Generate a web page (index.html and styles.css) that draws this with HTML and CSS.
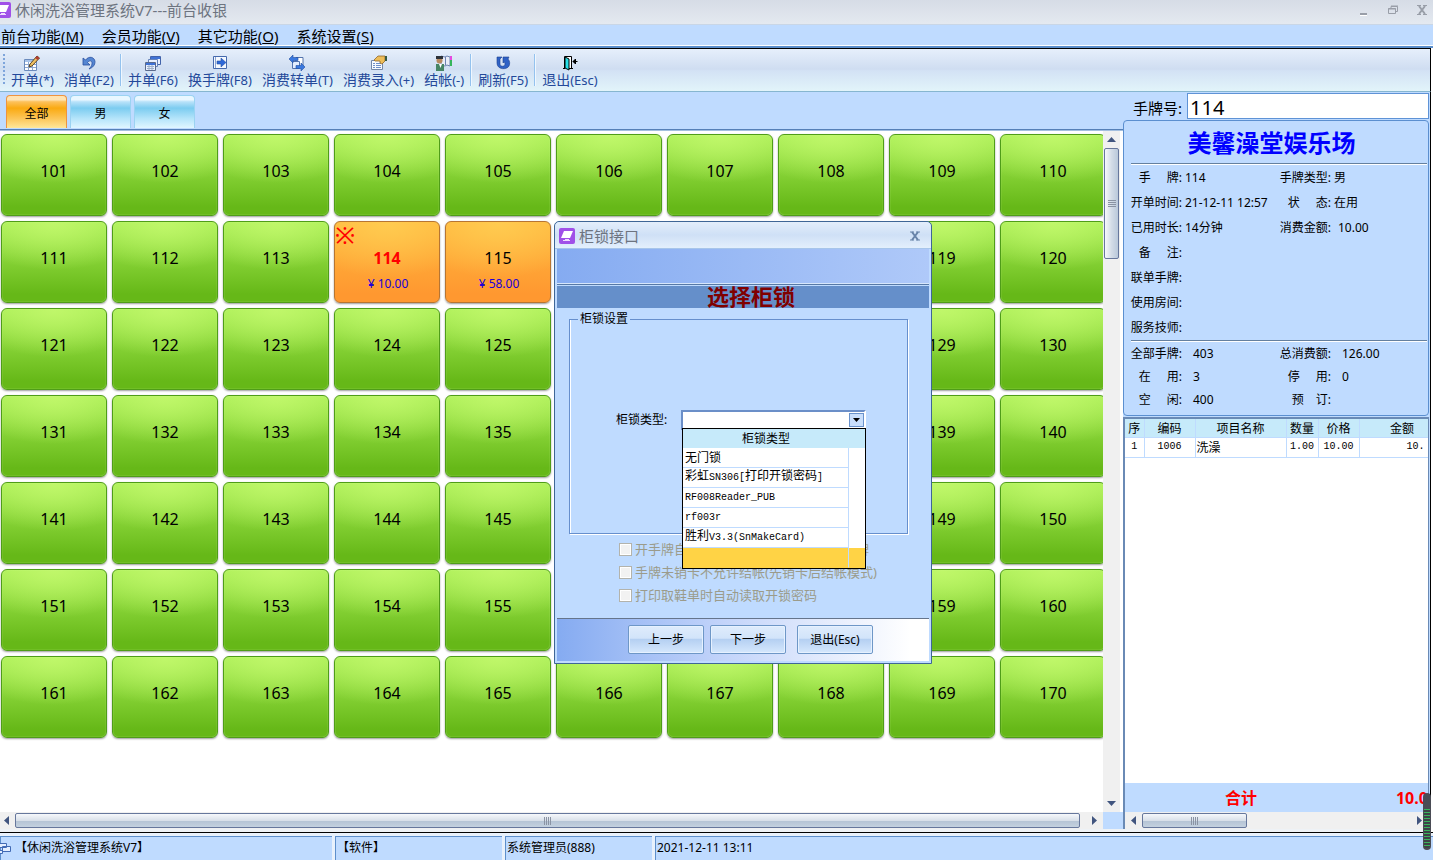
FILE: index.html
```html
<!DOCTYPE html>
<html lang="zh-CN">
<head>
<meta charset="utf-8">
<title>休闲洗浴管理系统V7---前台收银</title>
<link rel="stylesheet" href="styles.css">
</head>
<body>
<div class="app">
  <header class="titlebar">
    <svg class="logo" viewBox="0 0 16 16"><rect width="16" height="16" rx="2" fill="#a050e8"/><path d="M5 3h9l-3 7H2z" fill="#fff"/><path d="M6 11h4v1h1v1H4v-1h2z" fill="#f0dcff"/></svg>
    <h1 class="titletext">休闲洗浴管理系统V7---前台收银</h1>
    <div class="winbtns">
      <button class="winbtn" aria-label="最小化"><svg viewBox="0 0 12 12"><path d="M2 9h7v2H2z" fill="#999ea8"/><path d="M2 11h7v1H2z" fill="#fff"/></svg></button>
      <button class="winbtn" aria-label="还原"><svg viewBox="0 0 12 12" fill="none" stroke="#999ea8"><path d="M4 4V2.500h6.500v5H9M4 2h7"/><path d="M1.500 4.500h7v5h-7zM1 5h8"/></svg></button>
      <button class="winbtn" aria-label="关闭"><svg viewBox="0 0 12 12"><path d="M3 2l6 8M9 2l-6 8" stroke="#999ea8" stroke-width="2"/><path d="M1 1.500h4M7 1.500h4M1 10.500h4M7 10.500h4" stroke="#999ea8"/></svg></button>
    </div>
  </header>
  <nav class="menubar">
    <a href="#">前台功能(<u>M</u>)</a>
    <a href="#">会员功能(<u>V</u>)</a>
    <a href="#">其它功能(<u>O</u>)</a>
    <a href="#">系统设置(<u>S</u>)</a>
  </nav>
  <div class="frame">
    <div class="toolbar">
      <span class="grip"></span>
      <button class="tool"><svg viewBox="0 0 16 16"><path d="M.500 4.500h12v11H.500z" fill="#fff" stroke="#6b8bbd"/><path d="M1 5h11v2H1z" fill="#a8c4ea"/><path d="M4.500 7v8M8.500 7v8M1 9.500h11M1 12.500h11" stroke="#8fa8cf"/><path d="M13 1l2.500 2L8 11l-3 1 1-3z" fill="#f0c060" stroke="#5a4526"/><path d="M13 1l2.500 2-2 2L11 3z" fill="#b03c34"/></svg>开单<span class="key">(*)</span></button>
      <button class="tool"><svg viewBox="0 0 16 16"><path d="M2 3v7h7L6.500 7.500C9 4.500 11.500 6 11 9c-.300 2-1.500 3.500-3 5 4-1.500 6-4 6-7.500C13.500 2 8 .5 4.500 5z" fill="#5586d2" stroke="#294f9e" stroke-width=".8"/></svg>消单<span class="key">(F2)</span></button>
      <span class="sep"></span>
      <button class="tool"><svg viewBox="0 0 16 16"><path d="M5.500 1.500h10v8h-10z" fill="#e9f1ff" stroke="#4263aa"/><path d="M6 2h9v2H6z" fill="#3f72d6"/><path d="M3.500 4.500h9v7h-9z" fill="#e9f1ff" stroke="#6582b9"/><path d="M.500 7.500h10v8H.500z" fill="#e9f1ff" stroke="#5a6a8c"/><path d="M1 8h9v2H1z" fill="#3f72d6"/><path d="M2 11.500h7M2 13.500h7M4 10v5M7 10v5" stroke="#9eafc9"/></svg>并单<span class="key">(F6)</span></button>
      <button class="tool"><svg viewBox="0 0 16 16"><path d="M1.500 1.500h13v12h-13z" fill="#f5f9ff" stroke="#4569ad"/><path d="M3.500 2v11" stroke="#8ba3cf"/><path d="M5 6h4V3l5 4.500L9 12V9H5z" fill="#2e68d8" stroke="#2750a3" stroke-width=".6"/></svg>换手牌<span class="key">(F8)</span></button>
      <button class="tool"><svg viewBox="0 0 16 16"><path d="M7 2.500h7v9H7z" fill="#fff" stroke="#5474ad"/><path d="M3.500 6.500h7v7h-7z" fill="#e4eeff" stroke="#5474ad"/><path d="M0 4l4-4v2.500h5v3H4V8zM16 12l-4 4v-2.500H7v-3h5V8z" fill="#3a78df" stroke="#234f9e" stroke-width=".6"/></svg>消费转单<span class="key">(T)</span></button>
      <button class="tool"><svg viewBox="0 0 16 16"><path d="M.500 5.500h11v9H.500z" fill="#f7faff" stroke="#7387a8"/><path d="M2 8.500h2M5 8.500h5M2 10.500h2M5 10.500h5M2 12.500h2M5 12.500h5" stroke="#6e8fc9"/><path d="M3 5l4-4h7v5l-3 3-2-1V6H4z" fill="#edbd59" stroke="#92672c" stroke-width=".8"/><path d="M14 1h2v5h-2z" fill="#385943"/></svg>消费录入<span class="key">(+)</span></button>
      <button class="tool"><svg viewBox="0 0 16 16"><path d="M5 1l4 1 2-1 3 1v9l-3-1-2 1-4-1z" fill="#e9edf8" stroke="#6d81ae"/><path d="M9.500 2v8" stroke="#6d81ae"/><path d="M14 1h2v4h-2z" fill="#e54ae0"/><path d="M14 5h2v6h-2z" fill="#35b55a"/><circle cx="3.500" cy="5.500" r="3" fill="#b78a61"/><path d="M0 1h7v3H0z" fill="#2c3138"/><path d="M0 16V9h8v7z" fill="#468564"/><path d="M3 9h3l-1.500 4z" fill="#fff"/></svg>结帐<span class="key">(-)</span></button>
      <span class="sep"></span>
      <button class="tool"><svg viewBox="0 0 16 16"><path d="M2 2h5L5 4v5c0 3 5 3 5 0 0-1-.500-2-1-2L8 8V2h6l-1 2c2 2 2 5 1 7-2 4-12 4-12-3z" fill="#2f62c6" stroke="#1c408d" stroke-width=".6"/></svg>刷新<span class="key">(F5)</span></button>
      <span class="sep"></span>
      <button class="tool"><svg viewBox="0 0 16 16"><path d="M2.500 13.500v-12h7v12" fill="#fff" stroke="#000"/><path d="M3 2l4 2v11l-4-2z" fill="#28e0e8" stroke="#000"/><path d="M1 13.500h2M7 13.500h4" stroke="#000"/><path d="M15.500 6.500H11M13.500 4v5M11 6.500l2-2v4z" stroke="#000" fill="#000"/></svg>退出<span class="key">(Esc)</span></button>
    </div>
    <main class="main">
      <section class="left">
        <div class="tabs" role="tablist">
          <button class="tab on" role="tab" aria-selected="true">全部</button>
          <button class="tab" role="tab">男</button>
          <button class="tab" role="tab">女</button>
        </div>
        <div class="scrollarea">
          <div class="tiles">
            <button class="tile">101</button><button class="tile">102</button><button class="tile">103</button><button class="tile">104</button><button class="tile">105</button><button class="tile">106</button><button class="tile">107</button><button class="tile">108</button><button class="tile">109</button><button class="tile">110</button>
            <button class="tile">111</button><button class="tile">112</button><button class="tile">113</button>
            <button class="tile busy current"><span class="mark">※</span>114<span class="fee">¥ 10.00</span></button>
            <button class="tile busy">115<span class="fee">¥ 58.00</span></button>
            <button class="tile">116</button><button class="tile">117</button><button class="tile">118</button><button class="tile">119</button><button class="tile">120</button>
            <button class="tile">121</button><button class="tile">122</button><button class="tile">123</button><button class="tile">124</button><button class="tile">125</button><button class="tile">126</button><button class="tile">127</button><button class="tile">128</button><button class="tile">129</button><button class="tile">130</button>
            <button class="tile">131</button><button class="tile">132</button><button class="tile">133</button><button class="tile">134</button><button class="tile">135</button><button class="tile">136</button><button class="tile">137</button><button class="tile">138</button><button class="tile">139</button><button class="tile">140</button>
            <button class="tile">141</button><button class="tile">142</button><button class="tile">143</button><button class="tile">144</button><button class="tile">145</button><button class="tile">146</button><button class="tile">147</button><button class="tile">148</button><button class="tile">149</button><button class="tile">150</button>
            <button class="tile">151</button><button class="tile">152</button><button class="tile">153</button><button class="tile">154</button><button class="tile">155</button><button class="tile">156</button><button class="tile">157</button><button class="tile">158</button><button class="tile">159</button><button class="tile">160</button>
            <button class="tile">161</button><button class="tile">162</button><button class="tile">163</button><button class="tile">164</button><button class="tile">165</button><button class="tile">166</button><button class="tile">167</button><button class="tile">168</button><button class="tile">169</button><button class="tile">170</button>
          </div>
          <div class="vbar">
            <svg class="arrow" viewBox="0 0 17 17"><path d="M4 11l4.500-5L13 11z" fill="#41557f"/></svg>
            <div class="vthumb"><svg viewBox="0 0 8 8"><path d="M0 .500h8M0 2.500h8M0 4.500h8M0 6.500h8" stroke="#8a93a3"/></svg></div>
            <svg class="arrow end" viewBox="0 0 17 17"><path d="M4 6l4.500 5L13 6z" fill="#41557f"/></svg>
          </div>
        </div>
        <div class="hbar">
          <svg class="arrow thin" viewBox="0 0 15 17"><path d="M9 4L4 8.500 9 13z" fill="#41557f"/></svg>
          <div class="hthumb wide"><svg viewBox="0 0 8 8"><path d="M.500 0v8M2.500 0v8M4.500 0v8M6.500 0v8" stroke="#8a93a3"/></svg></div>
          <svg class="arrow end" viewBox="0 0 17 17"><path d="M6 4l5 4.500L6 13z" fill="#41557f"/></svg>
          <span class="corner"></span>
        </div>
      </section>
      <aside class="right">
        <div class="finder"><label for="card">手牌号:</label><input id="card" type="text" value="114"></div>
        <div class="card">
          <h2 class="shop">美馨澡堂娱乐场</h2>
          <dl class="info">
            <dt>手&emsp;&emsp13;牌:</dt><dd>114</dd><dt>手牌类型:</dt><dd>男</dd>
            <dt>开单时间:</dt><dd>21-12-11 12:57</dd><dt>状&emsp;&emsp13;态:</dt><dd>在用</dd>
            <dt>已用时长:</dt><dd>14分钟</dd><dt>消费金额:</dt><dd>&emsp13;10.00</dd>
            <dt>备&emsp;&emsp13;注:</dt><dd></dd><dt></dt><dd></dd>
            <dt>联单手牌:</dt><dd></dd><dt></dt><dd></dd>
            <dt>使用房间:</dt><dd></dd><dt></dt><dd></dd>
            <dt>服务技师:</dt><dd></dd><dt></dt><dd></dd>
          </dl>
          <dl class="info stats">
            <dt>全部手牌:</dt><dd>403</dd><dt>总消费额:</dt><dd>126.00</dd>
            <dt>在&emsp;&emsp13;用:</dt><dd>3</dd><dt>停&emsp;&emsp13;用:</dt><dd>0</dd>
            <dt>空&emsp;&emsp13;闲:</dt><dd>400</dd><dt>预&emsp;订:</dt><dd></dd>
          </dl>
        </div>
        <div class="bill">
          <div class="billrows">
            <table class="items">
              <colgroup><col class="c1"><col class="c2"><col class="c3"><col class="c4"><col class="c5"><col class="c6"></colgroup>
              <thead><tr><th>序</th><th>编码</th><th>项目名称</th><th>数量</th><th>价格</th><th>金额</th></tr></thead>
              <tbody><tr><td class="num">1</td><td class="num">1006</td><td>洗澡</td><td class="num">1.00</td><td class="num">10.00</td><td class="num sum">10.</td></tr></tbody>
            </table>
          </div>
          <div class="total"><span class="totlabel">合计</span><span class="totval">10.00</span></div>
          <div class="hbar">
            <svg class="arrow" viewBox="0 0 17 17"><path d="M11 4L6 8.500l5 4.500z" fill="#41557f"/></svg>
            <div class="hthumb short"><svg viewBox="0 0 8 8"><path d="M.500 0v8M2.500 0v8M4.500 0v8M6.500 0v8" stroke="#8a93a3"/></svg></div>
            <svg class="arrow end" viewBox="0 0 17 17"><path d="M6 4l5 4.500L6 13z" fill="#41557f"/></svg>
          </div>
        </div>
      </aside>
    </main>
  </div>
  <footer class="status">
    <span class="cell s1"><svg viewBox="0 0 12 14" fill="#e4efff" stroke="#426bb5"><path d="M-3.500 2.500h10v4h-10zM2.500 5.500h8v5h-8zM-3.500 9.500h6v3h-6z"/></svg>【休闲洗浴管理系统V7】</span>
    <span class="cell s2">【软件】</span>
    <span class="cell s3">系统管理员(888)</span>
    <span class="cell s4">2021-12-11 13:11</span>
  </footer>

  <section class="dialog" role="dialog" aria-labelledby="dlgname">
    <header class="dlgtitle">
      <svg class="logo" viewBox="0 0 16 16"><rect width="16" height="16" rx="2" fill="#a050e8"/><path d="M5 3h9l-3 7H2z" fill="#fff"/><path d="M6 11h4v1h1v1H4v-1h2z" fill="#f0dcff"/></svg>
      <span id="dlgname" class="titletext">柜锁接口</span>
      <button class="winbtn" aria-label="关闭对话框"><svg viewBox="0 0 12 12"><path d="M3 2l6 8M9 2l-6 8" stroke="#6883a8" stroke-width="2"/><path d="M1 2h4M7 2h4M1 10h4M7 10h4" stroke="#6883a8"/></svg></button>
    </header>
    <div class="banner"></div>
    <h2 class="dlghead">选择柜锁</h2>
    <div class="dlgbody">
      <fieldset class="group">
        <legend>柜锁设置</legend>
        <div class="field">
          <label for="lock">柜锁类型:</label>
          <div class="combo">
            <select id="lock"><option></option></select>
            <span class="drop"><svg viewBox="0 0 7 4"><path d="M0 0h7L3.500 4z"/></svg></span>
            <table class="popup">
              <thead><tr><th>柜锁类型</th><th class="spare"></th></tr></thead>
              <tbody>
                <tr><td>无门锁</td><td></td></tr>
                <tr><td>彩虹<span class="mono">SN306[</span>打印开锁密码<span class="mono">]</span></td><td></td></tr>
                <tr><td><span class="mono">RF008Reader_PUB</span></td><td></td></tr>
                <tr><td><span class="mono">rf003r</span></td><td></td></tr>
                <tr><td>胜利<span class="mono">V3.3(SnMakeCard)</span></td><td></td></tr>
                <tr class="picked"><td></td><td></td></tr>
              </tbody>
            </table>
          </div>
        </div>
      </fieldset>
      <div class="checks">
        <label><input type="checkbox" disabled>开手牌自动打开锁密码并且自动读取手牌</label>
        <label><input type="checkbox" disabled>手牌未销卡不允许结帐(先销卡后结帐模式)</label>
        <label><input type="checkbox" disabled>打印取鞋单时自动读取开锁密码</label>
      </div>
    </div>
    <footer class="dlgfoot">
      <button class="btn">上一步</button>
      <button class="btn">下一步</button>
      <button class="btn last">退出(Esc)</button>
    </footer>
  </section>
  <div class="meter"></div>
</div>
</body>
</html>
```
FILE: styles.css
```css
* { box-sizing: border-box; }
body {
  margin: 0;
  font: 12px/16px "Noto Sans", "Noto Sans CJK SC", sans-serif;
  color: #000;
}
button, input, select { font: inherit; color: inherit; }
button { border: 0; padding: 0; background: none; }
h1, h2, dl, dd { margin: 0; font-weight: normal; }

.app {
  position: relative;
  display: flex;
  flex-direction: column;
  height: 100vh;
  overflow: hidden;
  background: #bfdbff;
}

/* title and menu */
.titlebar {
  display: flex;
  align-items: center;
  height: 25px;
  padding-bottom: 4px;
  background: linear-gradient(#d6dce6, #e4e9f0);
  border-bottom: 1px solid #c9d6e6;
}
.logo { width: 16px; height: 16px; flex: none; }
.titlebar .logo { margin-left: -5px; }
.titletext { margin-left: 4px; font-size: 15px; line-height: 20px; color: #6d7480; }
.winbtns { display: flex; gap: 17px; margin-left: auto; padding-right: 5px; }
.winbtn { width: 12px; height: 12px; }
.winbtn svg { display: block; width: 12px; height: 12px; }
.menubar {
  display: flex;
  gap: 18px;
  height: 20px;
  padding-left: 1px;
  font-size: 15px;
  line-height: 23px;
}
.menubar a { color: #000; text-decoration: none; white-space: nowrap; }

.frame {
  flex: 1;
  display: flex;
  flex-direction: column;
  min-height: 0;
  border-top: 1px solid #fff;
  box-shadow: inset 0 2px #5d8fcb;
  padding-top: 2px;
  background: #fff;
}
.toolbar {
  display: flex;
  align-items: flex-start;
  gap: 10px;
  height: 44px;
  margin-right: 2px;
  padding: 5px 0 0 3px;
  border-top: 1px solid #000;
  border-right: 1px solid #000;
  border-bottom: 1px solid #86b6d0;
  background: linear-gradient(#e6effb, #cfddf1 48%, #d3e2f5 52%, #e2f4fa);
}
.grip { width: 2px; height: 32px; margin-right: -4px; background: repeating-linear-gradient(#7ea5db 0 2px, transparent 2px 4px); }
.tool { font-size: 14px; line-height: 18px; color: #24499a; white-space: nowrap; }
.key { font-size: 13px; }
.tool svg { display: block; width: 16px; height: 16px; margin: 1px auto 0; }
.sep { width: 2px; height: 32px; margin: 0 -4px; background: #94c2ee; border-right: 1px solid #eff7ff; }

.main {
  flex: 1;
  display: flex;
  min-height: 0;
  margin-right: 2px;
  background: #bfdbff;
  border-right: 1px solid #000;
  border-bottom: 3px solid #eef2f6;
}
.left { flex: 1; min-width: 0; display: flex; flex-direction: column; }
.tabs { display: flex; gap: 3px; height: 38px; padding: 3px 0 0 6px; border-bottom: 1px solid #5580b8; }
.tab {
  width: 61px;
  height: 33px;
  padding-top: 3px;
  border: 1px solid #9bd3f2;
  border-bottom: 0;
  border-radius: 4px 4px 0 0;
  background: linear-gradient(#e9f7ff 0 12%, #b9e2fa 18%, #7cccf0 38%, #b4e4fa 70%, #e0f6ff);
}
.tab.on { border-color: #ee9440; background: linear-gradient(#ffe3b0 0 12%, #fdc15c 18%, #faaa12 38%, #fcc558 70%, #ffe79a); }
.scrollarea { flex: 1; display: flex; min-height: 0; border-top: 1px solid #a4bfdf; background: #fff; }
.tiles {
  flex: 1;
  min-width: 0;
  overflow: hidden;
  display: grid;
  grid-template-columns: repeat(10, 106px);
  grid-auto-rows: 82px;
  gap: 5px;
  align-content: start;
  padding: 3px 0 0 1px;
}
.tile {
  position: relative;
  display: flex;
  flex-direction: column;
  align-items: center;
  padding-top: 23px;
  font-size: 16px;
  line-height: 26px;
  border: 1px solid #4f9d18;
  border-radius: 6px;
  box-shadow: 0 1px 2px #9c9c9c, inset 0 0 1px #d5ffa0;
  background: radial-gradient(90% 60% at 50% 0, #c0f76a, transparent), linear-gradient(#a8ee55, #66b818 90%);
}
.tile.busy {
  border-color: #b77532;
  box-shadow: 0 1px 2px #9c9c9c;
  background: radial-gradient(90% 70% at 50% 0, #ffcb50, transparent), linear-gradient(#ffb93f, #ff9830 90%);
}
.tile.current { color: #f00; font-weight: bold; }
.fee { margin: 5px 0 0 2px; font-size: 12px; line-height: 16px; font-weight: normal; color: #2000d8; }
.mark { position: absolute; left: 0; top: 0; font-size: 24px; font-weight: normal; }

/* scroll bars */
.vbar { display: flex; flex-direction: column; width: 17px; margin-right: 3px; background: #f0f0f0; }
.arrow { width: 17px; height: 17px; flex: none; }
.arrow.thin { width: 15px; }
.vbar .end { margin-top: auto; }
.hbar .end { margin-left: auto; }
.vthumb, .hthumb { display: flex; align-items: center; justify-content: center; border: 1px solid #66779c; border-radius: 2px; }
.vthumb { height: 111px; margin: 0 1px; background: linear-gradient(90deg, #f6f8fb, #d3dce7 50%, #b9c8da); }
.hthumb { height: 15px; margin: 1px 0; background: linear-gradient(#f6f8fb, #d9e0e9 50%, #b5c4d5 55%, #c4d1df); }
.vthumb svg, .hthumb svg { width: 8px; height: 8px; }
.hbar { display: flex; height: 17px; background: #f0f0f0; }
.hthumb.wide { flex: 1; margin-right: 6px; }
.hthumb.short { width: 105px; }
.corner { width: 20px; background: #bfdbff; }

/* right side */
.right { display: flex; flex-direction: column; width: 307px; padding: 1px 1px 0 0; }
.finder { display: flex; align-items: center; justify-content: flex-end; gap: 5px; height: 26px; }
.finder label { font-size: 15px; line-height: 22px; padding-top: 4px; }
.finder input {
  width: 242px;
  height: 26px;
  padding: 2px 2px 0;
  border: 1px solid #5f93d6;
  background: #fff;
  font-size: 20px;
}
.card { margin: 1px 0; padding: 5px 1px 4px 7px; border: 1px solid #5b8fd0; border-radius: 4px; }
.shop {
  height: 38px;
  padding-right: 15px;
  border-bottom: 1px solid #65809f;
  box-shadow: 0 1px #fff;
  font-size: 24px;
  line-height: 34px;
  font-weight: bold;
  text-align: center;
  color: #00f;
}
.info {
  display: grid;
  grid-template-columns: 51px 95px 48px 1fr;
  grid-auto-rows: 25px;
  column-gap: 3px;
  padding-top: 1px;
  line-height: 25px;
  white-space: nowrap;
}
.info dt { text-align: right; display: flex; justify-content: flex-end; }
.stats { grid-auto-rows: 23px; line-height: 23px; border-top: 1px solid #65809f; box-shadow: inset 0 1px #fff; }
.stats dd { padding-left: 8px; }
.bill { flex: 1; display: flex; flex-direction: column; min-height: 0; border: 1px solid #6a8ab5; border-left-width: 2px; border-top-width: 2px; border-bottom: 0; background: #fff; }
.billrows { flex: 1; overflow: hidden; }
.items { width: 320px; table-layout: fixed; border-collapse: collapse; font-family: "Noto Sans CJK SC", sans-serif; }
.c1 { width: 19px; }
.c2 { width: 51px; }
.c3 { width: 91px; }
.c4 { width: 32px; }
.c5 { width: 41px; }
.c6 { width: 86px; }
.items th, .items td { padding: 0 1px; border-right: 1px solid #bfdbff; border-bottom: 1px solid #bfdbff; line-height: 16px; font-weight: normal; white-space: nowrap; }
.items th { height: 18px; background: #c6eafa; }
.items td { height: 20px; }
.items .num, .mono { font-family: "Liberation Mono", monospace; font-size: 10px; }
.items .num { text-align: center; }
.items .sum { text-align: right; padding-right: 20px; }
.total { display: flex; justify-content: space-between; height: 29px; padding-left: 100px; background: #bfdbff; color: #f00; font-size: 16px; line-height: 30px; font-weight: bold; white-space: nowrap; overflow: hidden; }
.totval { margin-right: -9px; }

/* status bar */
.status { display: flex; gap: 3px; height: 28px; border-top: 1px solid #000; padding-top: 3px; background: #e8f1fc; }
.cell { display: flex; align-items: center; border-top: 1px solid #5d8fcb; border-left: 1px solid #5d8fcb; padding: 0 0 2px 1px; background: #bfdbff; white-space: nowrap; }
.cell svg { width: 12px; height: 14px; margin: 0 3px 0 -2px; }
.s1 { width: 332px; }
.s2 { width: 167px; }
.s3 { width: 147px; }
.s4 { flex: 1; }

/* dialog */
.dialog {
  position: absolute;
  left: 554px;
  top: 221px;
  width: 378px;
  border: 1px solid #3f6696;
  border-radius: 5px 5px 0 0;
  padding: 0 2px 2px;
  background: #bfdbff;
}
.dlgtitle { display: flex; align-items: center; height: 27px; margin: 0 -2px; padding: 2px 10px 0 4px; border-bottom: 1px solid #a7c5ea; border-radius: 5px 5px 0 0; background: linear-gradient(#e3eefb, #cfe0f6 50%, #e3effc); }
.dlgtitle .winbtn { margin-left: auto; }
.banner { height: 36px; border-bottom: 1px solid #5779a6; box-shadow: inset 0 -1px #d6e6fb; background: linear-gradient(90deg, #85abf1, #afc9f9); }
.dlghead { margin-top: 1px; height: 22px; padding-left: 16px; background: #658fca; color: #800000; font-size: 22px; line-height: 20px; font-weight: bold; text-align: center; }
.dlgbody { height: 310px; padding: 2px 21px 0 12px; }
.group { height: 224px; margin: 0; padding: 82px 0 0 46px; border: 1px solid #668fcd; box-shadow: 1px 1px #fff, inset 1px 0 #fff; }
.group legend { margin-left: -38px; padding: 0 2px; line-height: 18px; }
.field { display: flex; gap: 12px; }
.field label { width: 53px; line-height: 20px; white-space: nowrap; }
.combo { position: relative; width: 185px; height: 20px; }
.combo select { display: block; width: 185px; height: 20px; appearance: none; border: 2px solid #6b8fc8; border-right-color: #fff; border-radius: 0; background: #fff; }
.drop { position: absolute; right: 2px; top: 3px; display: flex; align-items: center; justify-content: center; width: 15px; height: 14px; border: 1px solid #6992cb; background: #c9dffc; pointer-events: none; }
.drop svg { width: 7px; height: 4px; }
.popup { position: absolute; z-index: 2; left: 1px; top: 18px; width: 184px; table-layout: fixed; border: 1px solid #000; border-spacing: 0; background: #fff; font-family: "Noto Sans CJK SC", sans-serif; }
.popup th { height: 19px; padding: 0 0 2px; background: #c6eafa; line-height: 16px; font-weight: normal; }
.popup .spare { width: 16px; }
.popup td { height: 20px; padding: 0 2px 2px; line-height: 14px; white-space: nowrap; }
.popup td:first-child { border-right: 1px solid #bfdbff; border-bottom: 1px solid #bfdbff; }
.popup .picked td { background: #ffd345; }
.popup .picked td:first-child { border-bottom-color: #ffd345; }
.checks { display: grid; gap: 3px; padding: 5px 0 0 50px; color: #9b9b8b; font-size: 13px; line-height: 20px; white-space: nowrap; }
.checks label { display: flex; align-items: center; gap: 3px; height: 20px; }
.checks input { appearance: none; width: 13px; height: 13px; margin: 0; border: 1px solid #b3b3ac; background: #f2f2f2; box-shadow: inset 0 0 0 1px #fff; }
.dlgfoot { display: flex; gap: 6px; height: 43px; padding: 6px 0 0 71px; border-top: 1px solid #65758c; background: linear-gradient(90deg, #85abf1, #c3d4fa 45%, #fff 95%); }
.btn { width: 76px; height: 29px; border: 1px solid #6e97c7; border-radius: 2px; background: linear-gradient(#dfecfc, #d2e4fa 45%, #b5d0f2 50%, #d6e8fd); box-shadow: inset 0 0 0 1px #e6f1ff; }
.btn.last { margin-left: 5px; }

.meter { position: absolute; right: 2px; bottom: 10px; width: 8px; height: 57px; padding: 16px 1px 2px; border-radius: 4px; background: repeating-linear-gradient(#39b45c 0 1px, #3e4248 1px 3px) content-box, #4a4c55; }
```
